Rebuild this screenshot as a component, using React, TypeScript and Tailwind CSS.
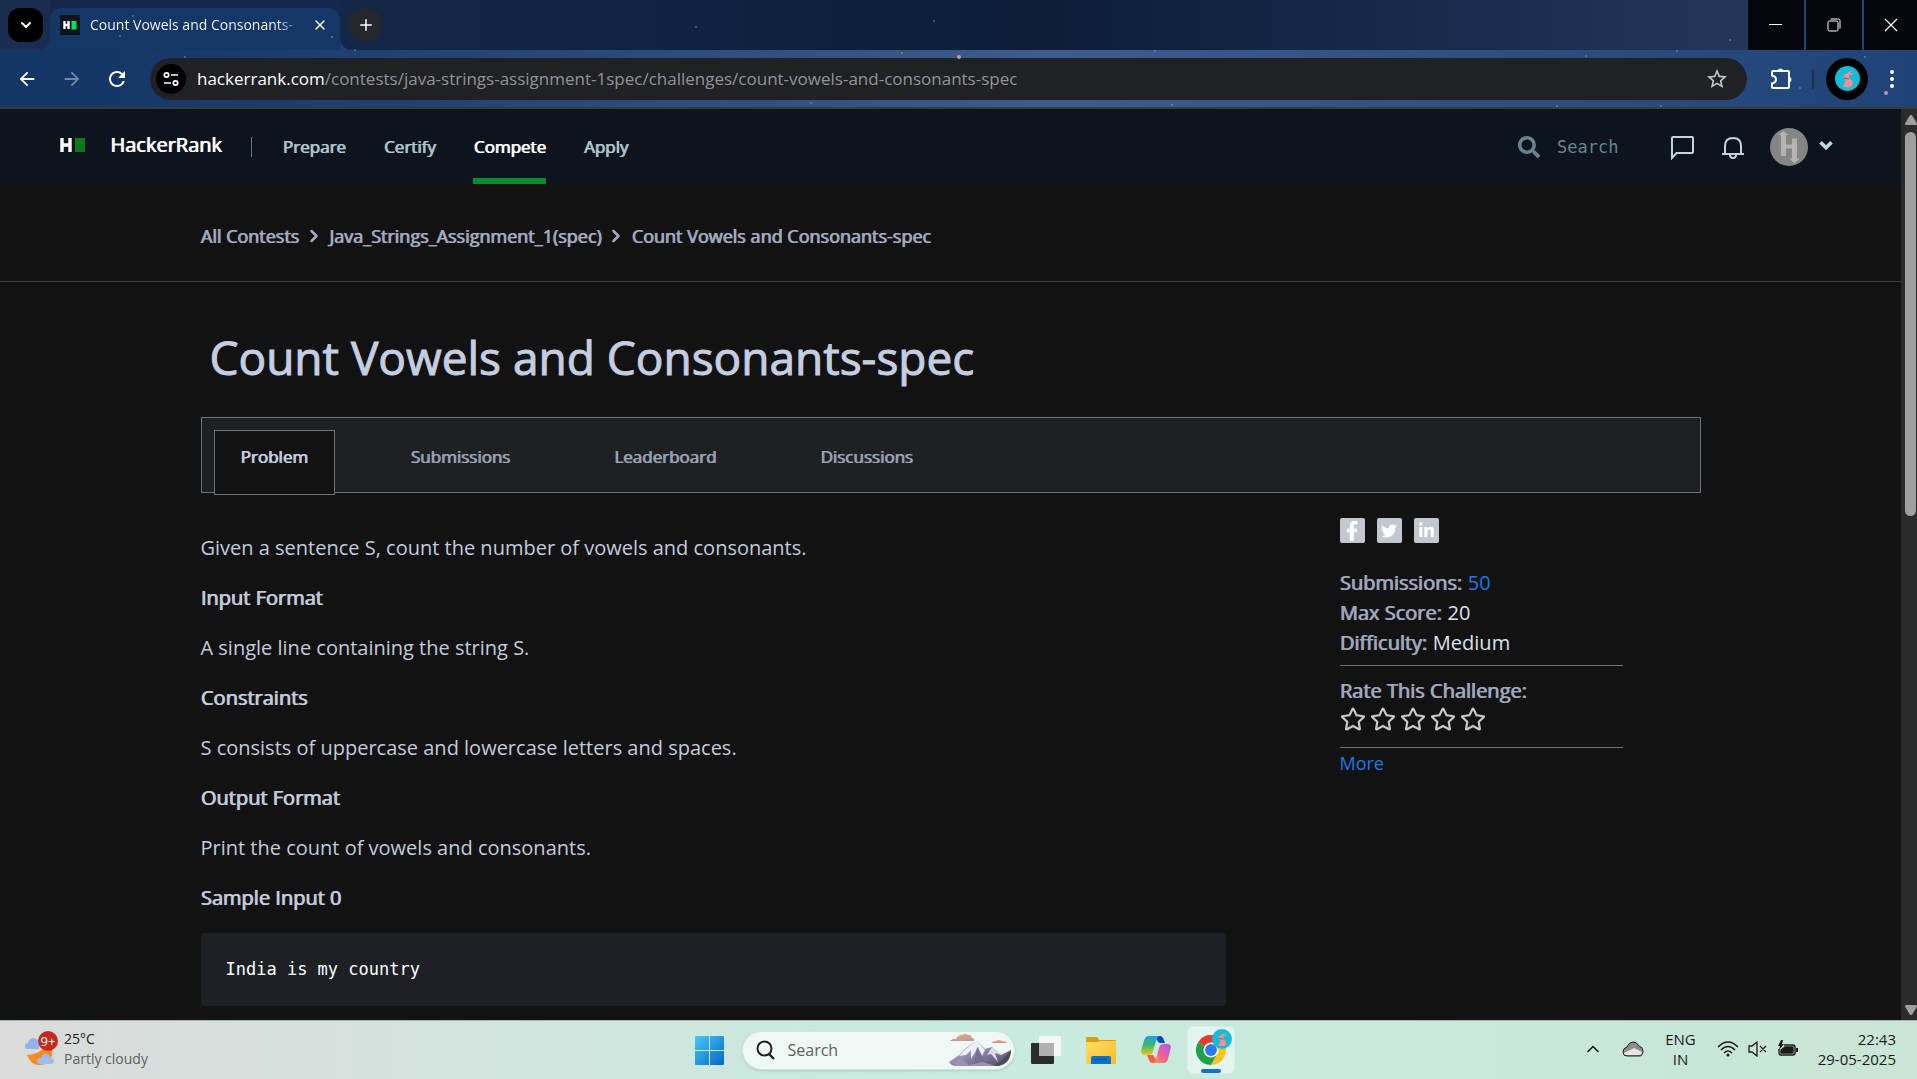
import React from "react";
import { ChevronDown, ChevronRight, ChevronUp, Plus, X } from "lucide-react";
import { FaRegStar, FaFacebookF, FaTwitter, FaLinkedinIn, FaSearch } from "react-icons/fa";
import { MdArrowBack, MdArrowForward, MdRefresh, MdStarBorder } from "react-icons/md";

const SPECKS = [
  [133, 16, 1], [120, 36, 1], [332, 37, 1], [355, 50, 1], [185, 57, 1], [902, 53, 1], [959, 57, 2], [1155, 51, 1],
  [811, 103, 1], [1172, 105, 1], [1730, 40, 1], [1586, 56, 1], [1677, 51, 1], [1865, 57, 1], [1800, 88, 1], [1886, 93, 2],
  [696, 27, 1], [934, 21, 1], [1557, 106, 1], [1661, 106, 1],
];

function Rabbit({ className }: { className: string }) {
  return (
    <svg viewBox="0 0 24 24" className={className} aria-hidden="true">
      <circle cx="12" cy="12" r="12" fill="#13bdd6" />
      <path d="M17.500 4.500C14.500 4.800 12.500 6 11 7.500L8.500 8.800C7.300 9.500 7.300 10.800 8.500 11.200L10.500 11.500C9.500 13 9.500 14 10 15.500L7.800 18.500C7.200 20 9 20.300 11 20.300H14.500C17.500 19.500 17.500 15.500 15.500 13.500C14 12.200 13.200 10.500 13.500 9C15.500 8.500 17.300 7.800 18 6.500L13.500 7.500C15 6 16.500 5.500 17.500 4.500Z" fill="#f58f98" />
      <path d="M8.500 11.200l5 1.300" stroke="#b8455f" strokeWidth="1" />
    </svg>
  );
}

function TabStrip() {
  return (
    <div className="flex h-[50px]">
      <div className="flex w-[50px] rounded-br-xl bg-[#1a2c4f] pl-2 pt-2">
        <button aria-label="Search tabs" className="flex h-[34px] w-[35px] items-center justify-center rounded-xl bg-black text-white">
          <ChevronDown size={16} strokeWidth={3} />
        </button>
      </div>
      <div className="w-[290px] bg-[#14284c] pt-2">
        <div className="flex h-[42px] items-center rounded-t-xl bg-[#143768] pb-2 pl-[10px] pr-[10px]">
          <svg viewBox="0 0 20 20" className="h-5 w-5 shrink-0" aria-hidden="true">
            <rect width="20" height="20" fill="#0d141e" />
            <path d="M4.500 6v8M8.500 6v8M3.500 10h5" stroke="#fff" strokeWidth="2.400" />
            <rect x="11.500" y="6" width="5" height="8.500" fill="#00e25b" />
          </svg>
          <span className="ml-[10px] flex-1 whitespace-nowrap bg-linear-to-r from-white from-88% to-transparent bg-clip-text text-sm text-transparent">
            Count Vowels and Consonants-
          </span>
          <button aria-label="Close tab" className="ml-2 flex h-5 w-5 items-center justify-center text-white">
            <X size={16} strokeWidth={2} />
          </button>
        </div>
      </div>
      <div className="flex flex-1 rounded-bl-xl bg-linear-to-r from-[#132748] via-[#0d1d3a] to-[#22365a] pl-2 pt-2">
        <button aria-label="New tab" className="flex h-[34px] w-[35px] items-center justify-center rounded-full bg-[#26272e] text-white">
          <Plus size={18} strokeWidth={2} />
        </button>
      </div>
      <div className="flex gap-[2px] text-white">
        <button aria-label="Minimize" className="flex w-14 items-center justify-center bg-[#03060c]">
          <svg viewBox="0 0 14 14" className="h-[14px] w-[14px]"><path d="M0 6.500h13" stroke="currentColor" /></svg>
        </button>
        <button aria-label="Restore" className="flex w-14 items-center justify-center bg-[#03060c]">
          <svg viewBox="0 0 14 14" className="h-[14px] w-[14px]" fill="none" stroke="currentColor">
            <rect x="1" y="3" width="10" height="10" rx="1.500" />
            <path d="M3.500 1H11.500Q13 1 13 2.500V10.500" />
          </svg>
        </button>
        <button aria-label="Close window" className="flex w-[53px] items-center justify-center bg-[#03060c]">
          <svg viewBox="0 0 14 14" className="h-[14px] w-[14px]"><path d="M1 1l12 12M13 1L1 13" stroke="currentColor" strokeWidth="1.200" /></svg>
        </button>
      </div>
    </div>
  );
}

function Toolbar() {
  return (
    <div className="flex h-[59px] items-center border-b-2 border-[#3a3a3a] pl-4 pr-[17px] text-white">
      <button aria-label="Back"><MdArrowBack size={22} /></button>
      <button aria-label="Forward" className="ml-[23px] text-[#7386a3]"><MdArrowForward size={22} /></button>
      <button aria-label="Reload" className="ml-[22px]"><MdRefresh size={24} /></button>
      <div className="ml-[21px] flex h-[42px] flex-1 items-center rounded-full bg-[#202124] pl-[6px] pr-[18px]">
        <button aria-label="View site information" className="flex h-[30px] w-[30px] items-center justify-center rounded-full bg-black">
          <svg viewBox="0 0 16 16" className="h-4 w-4" fill="none" stroke="currentColor" strokeWidth="1.700">
            <circle cx="3.500" cy="4" r="2.200" />
            <path d="M8 4h7M1 12h7" />
            <circle cx="12.500" cy="12" r="2.200" />
          </svg>
        </button>
        <div role="textbox" aria-label="Address and search bar" className="ml-[11px] flex-1 truncate text-[17px] text-[#939396]">
          <span className="text-white">hackerrank.com</span>/contests/java-strings-assignment-1spec/challenges/count-vowels-and-consonants-spec
        </div>
        <button aria-label="Bookmark this tab" className="text-[#c7c7c7]"><MdStarBorder size={24} /></button>
      </div>
      <button aria-label="Extensions" className="ml-[22px]">
        <svg viewBox="0 0 24 24" className="h-6 w-6" fill="none" stroke="currentColor" strokeWidth="2">
          <path d="M4 4H19Q20 4 20 5V20Q20 21 19 21H4Q3 21 3 20V16.500Q7 15.500 7 12.500Q7 9.500 3 8.500V5Q3 4 4 4Z" />
          <path d="M9 3.500Q9 1.500 11.500 1.500T14 3.500zM20.500 10Q22.500 10 22.500 12.500T20.500 15z" fill="currentColor" stroke="none" />
        </svg>
      </button>
      <span className="ml-[19px] h-5 w-[2px] bg-[#26304a]" />
      <button aria-label="Profile" className="ml-3 flex h-[42px] w-[42px] items-center justify-center rounded-full bg-black">
        <Rabbit className="h-[25px] w-[25px]" />
      </button>
      <button aria-label="Menu" className="ml-4 flex w-4 justify-center">
        <svg viewBox="0 0 4 20" className="h-5 w-1" fill="currentColor"><circle cx="2" cy="3" r="2" /><circle cx="2" cy="10" r="2" /><circle cx="2" cy="17" r="2" /></svg>
      </button>
    </div>
  );
}

function BrowserChrome() {
  return (
    <div className="relative shrink-0 bg-linear-to-r from-[#143666] from-5% via-[#3b5d8e] via-55% to-[#1f4377]">
      <TabStrip />
      <Toolbar />
      <svg className="pointer-events-none absolute left-0 top-0 h-full w-full" aria-hidden="true">
        {SPECKS.map(([x, y, r]) => (
          <circle key={`${x}-${y}`} cx={x} cy={y} r={r} fill={r === 2 ? "#d99aa5" : "#7f9cc4"} opacity={r === 2 ? 0.9 : 0.6} />
        ))}
      </svg>
    </div>
  );
}

function NavLink({ label, active }: { label: string; active?: boolean }) {
  return (
    <a
      href="#"
      className={
        active
          ? "flex h-full items-center border-b-[6px] border-[#058c2d] pt-[6px] text-[17px] text-white [text-shadow:1px_0_0_currentColor]"
          : "flex h-full items-center text-[17px] text-[#b2c6cd] [text-shadow:1px_0_0_currentColor]"
      }
    >
      {label}
    </a>
  );
}

function SiteHeader() {
  return (
    <header className="flex h-[75px] shrink-0 items-center bg-[#0d141e] pl-[60px] pr-16">
      <a href="#" className="flex items-center pb-1 text-white">
        <svg viewBox="0 0 25 14" className="h-[14px] w-[25px]" aria-hidden="true">
          <path d="M2 0v14M10 0v14M2 7h8" stroke="#fff" strokeWidth="3.400" />
          <rect x="15" width="10" height="14" fill="#0a7a1c" />
        </svg>
        <span className="ml-[25px] text-xl [text-shadow:1px_0_0_currentColor]">HackerRank</span>
      </a>
      <span className="ml-[29px] h-5 w-px bg-[#5c7a8c]" />
      <nav className="ml-[31px] flex h-full gap-[38px]">
        <NavLink label="Prepare" />
        <NavLink label="Certify" />
        <NavLink label="Compete" active />
        <NavLink label="Apply" />
      </nav>
      <label className="ml-auto flex items-center text-[#68868f]">
        <FaSearch size={22} aria-hidden="true" />
        <input
          type="search"
          aria-label="Search"
          placeholder="Search"
          className="ml-[17px] w-[100px] bg-transparent pt-[2px] font-['DejaVu_Sans_Mono',monospace] text-[17px] outline-none placeholder:text-[#68868f]"
        />
      </label>
      <button aria-label="Messages" className="ml-3 text-[#c1d5dc]">
        <svg viewBox="0 0 26 26" className="h-[26px] w-[26px]" fill="none" stroke="currentColor" strokeWidth="2">
          <path d="M3 24V4Q3 3 4 3H23Q24 3 24 4V18Q24 19 23 19H7.500Z" />
        </svg>
      </button>
      <button aria-label="Notifications" className="ml-[25px] text-[#c1d5dc]">
        <svg viewBox="0 0 26 26" className="h-[26px] w-[26px]" fill="none" stroke="currentColor" strokeWidth="2">
          <path d="M2 20H24M5 19.500V12Q5 4 13 4T21 12V19.500M10 21Q10 24 13 24T16 21" />
        </svg>
      </button>
      <button aria-label="Account" className="ml-6 flex items-center gap-[7px] text-[#c1d5dc]">
        <svg viewBox="0 0 38 38" className="h-[38px] w-[38px]" aria-hidden="true">
          <circle cx="19" cy="19" r="19" fill="#858585" />
          <path d="M13.500 3l5 4h-2.500v9.500h6V10.500h5V30.500h2.500l-5 5-5-5h2.500V20.500h-6V28h-5V7H8.500z" fill="#b4b4b4" />
        </svg>
        <span className="pb-[3px]"><ChevronDown size={22} strokeWidth={4} strokeLinecap="butt" strokeLinejoin="miter" /></span>
      </button>
    </header>
  );
}

function Breadcrumb() {
  return (
    <nav aria-label="Breadcrumb" className="border-b border-[#3f3f3f] pt-[37px] pb-[30px]">
      <div className="mx-auto flex max-w-[1500px] items-center gap-[5px] text-lg leading-[30px] text-[#a3aac0] [text-shadow:1px_0_0_currentColor]">
        <a href="#">All Contests</a>
        <ChevronRight size={20} strokeWidth={3} />
        <a href="#">Java_Strings_Assignment_1(spec)</a>
        <ChevronRight size={20} strokeWidth={3} />
        <span>Count Vowels and Consonants-spec</span>
      </div>
    </nav>
  );
}

const TABS = ["Submissions", "Leaderboard", "Discussions"];

function ChallengeTabs() {
  return (
    <div role="tablist" className="flex h-[76px] border border-[#6f7379] bg-[#1f2022] pl-3 pt-3 text-[17px]">
      <button role="tab" aria-selected="true" className="h-[65px] w-[121px] border border-[#6f7379] bg-[#121212] pb-3 text-[#c8d0e0] [text-shadow:1px_0_0_currentColor]">
        Problem
      </button>
      <div className="ml-[76px] flex h-[65px] gap-[104px] pb-3">
        {TABS.map((tab) => (
          <button key={tab} role="tab" aria-selected="false" className="text-[#9aa1b8] [text-shadow:1px_0_0_currentColor]">
            {tab}
          </button>
        ))}
      </div>
    </div>
  );
}

function Section({ title, text }: { title: string; text?: string }) {
  return (
    <>
      <h2 className="[text-shadow:1px_0_0_currentColor]">{title}</h2>
      {text && <p>{text}</p>}
    </>
  );
}

function Statement() {
  return (
    <article className="flex flex-col gap-5 pt-10 text-xl leading-[30px] text-[#c3cbdc]">
      <p>Given a sentence S, count the number of vowels and consonants.</p>
      <Section title="Input Format" text="A single line containing the string S." />
      <Section title="Constraints" text="S consists of uppercase and lowercase letters and spaces." />
      <Section title="Output Format" text="Print the count of vowels and consonants." />
      <Section title="Sample Input 0" />
      <pre className="rounded-sm bg-[#1d2025] px-[25px] py-[22px] font-['DejaVu_Sans_Mono',monospace] text-[17px] leading-[29px] text-white">India is my country</pre>
    </article>
  );
}

const SHARES = [
  { name: "Facebook", icon: <FaFacebookF size={20} /> },
  { name: "Twitter", icon: <FaTwitter size={16} /> },
  { name: "LinkedIn", icon: <FaLinkedinIn size={17} /> },
];

function Sidebar() {
  return (
    <aside className="max-w-[283px] pt-[25px] text-xl leading-[30px] text-[#a0a7bd]">
      <div className="flex gap-3 text-white">
        {SHARES.map((s) => (
          <a key={s.name} href="#" aria-label={s.name} className="flex h-[25px] w-[25px] items-center justify-center rounded-xs bg-[#c2c7d0]">
            {s.icon}
          </a>
        ))}
      </div>
      <dl className="mt-[25px] border-b border-[#6f7379] pb-[7px]">
        <div className="flex gap-[6px]">
          <dt className="[text-shadow:1px_0_0_currentColor]">Submissions:</dt>
          <dd><a href="#" className="text-[#1f78e6]">50</a></dd>
        </div>
        <div className="flex gap-[6px]">
          <dt className="[text-shadow:1px_0_0_currentColor]">Max Score:</dt>
          <dd className="text-[#dde2ec]">20</dd>
        </div>
        <div className="flex gap-[6px]">
          <dt className="[text-shadow:1px_0_0_currentColor]">Difficulty:</dt>
          <dd className="text-[#dde2ec]">Medium</dd>
        </div>
      </dl>
      <fieldset className="border-b border-[#6f7379] pt-[10px] pb-[15px]">
        <legend className="float-left w-full [text-shadow:1px_0_0_currentColor]">Rate This Challenge:</legend>
        <div className="flex w-full gap-1 text-[#c9c9c9]">
          {[1, 2, 3, 4, 5].map((n) => (
            <label key={n} className="relative block h-[26px] w-[26px]">
              <input type="radio" name="rating" value={n} aria-label={`${n} of 5 stars`} className="sr-only" />
              <FaRegStar size={26} />
            </label>
          ))}
        </div>
      </fieldset>
      <a href="#" className="text-lg leading-[30px] text-[#1f78e6]">More</a>
    </aside>
  );
}

function Scrollbar() {
  return (
    <div className="flex w-4 shrink-0 flex-col items-center bg-[#2b2b2b] pl-[3px] pt-[6px] pb-[5px]" aria-hidden="true">
      <svg viewBox="0 0 12 10" className="h-[10px] w-3" fill="#9f9f9f"><path d="M6 0Q7 0 7.500 1L12 8.500Q12 10 11 10H1Q0 10 0 8.500L4.500 1Q5 0 6 0z" /></svg>
      <div className="mt-[7px] h-[384px] w-[11px] rounded-full bg-[#9f9f9f]" />
      <svg viewBox="0 0 12 10" className="mt-auto h-[10px] w-3" fill="#9f9f9f"><path d="M6 10Q7 10 7.500 9L12 1.500Q12 0 11 0H1Q0 0 0 1.500L4.500 9Q5 10 6 10z" /></svg>
    </div>
  );
}

function Mountains() {
  return (
    <svg viewBox="0 0 64 34" className="h-[34px] w-16" aria-hidden="true">
      <defs>
        <linearGradient id="rock" x1="0" y1="0" x2="1" y2="1">
          <stop offset="0" stopColor="#d9d6ea" /><stop offset="0.500" stopColor="#8a83a6" /><stop offset="1" stopColor="#4c4862" />
        </linearGradient>
        <linearGradient id="dusk" x1="0" y1="0" x2="0" y2="1">
          <stop offset="0" stopColor="#e8a66e" /><stop offset="1" stopColor="#b99aa4" />
        </linearGradient>
      </defs>
      <path d="M1 8q3-3 6-2q2-4 6-4q3-2 6 0q3-1 4 3q3 0 2 3z" fill="url(#dusk)" />
      <path d="M42 10q2-2 5-2q3-2 6 0q4 0 5 2z" fill="url(#dusk)" />
      <path d="M0 29L10 22L18 14L28 8L36 16L43 14L52 22L62 17Q62 30 50 33H8Q2 33 0 29z" fill="url(#rock)" />
      <path d="M28 8L18 15L10 23L17 22L22 17L22 26L29 14L33 23L36 17z" fill="#f0eef8" />
      <path d="M43 14L38 22L42 21L49 29L46 20L52 22z" fill="#dcd9ec" />
      <path d="M28 14L25 33H36L33 23z" fill="#75708f" />
      <path d="M62 17L51 29L44 33Q60 34 62 17z" fill="#4f4b57" />
      <path d="M2 29L12 26L20 32L34 29L46 33H8z" fill="#9b91b5" />
    </svg>
  );
}

function ChromeLogo() {
  return (
    <svg viewBox="0 0 48 48" className="h-[30px] w-[30px]" aria-hidden="true">
      <path d="M24 24L3.200 12A24 24 0 0 1 44.800 12z" fill="#e53b2e" />
      <path d="M24 24L3.200 12A24 24 0 0 0 24 48L34.400 30z" fill="#1fa04b" />
      <path d="M24 24L44.800 12A24 24 0 0 1 24 48L34.400 30z" fill="#fcc31e" />
      <path d="M24 12H44.800L34 30z" fill="#fcc31e" />
      <circle cx="24" cy="24" r="12" fill="#fff" />
      <circle cx="24" cy="24" r="9.500" fill="#3079ea" />
    </svg>
  );
}

function Copilot() {
  return (
    <svg viewBox="0 0 30 30" className="h-[30px] w-[30px]" aria-hidden="true">
      <defs>
        <linearGradient id="cpl" x1="0" y1="0" x2="0" y2="1">
          <stop offset="0" stopColor="#1c9df0" /><stop offset="0.500" stopColor="#3fb868" /><stop offset="1" stopColor="#f3c61b" />
        </linearGradient>
        <linearGradient id="cpr" x1="1" y1="0" x2="0" y2="1">
          <stop offset="0" stopColor="#a55bf0" /><stop offset="0.500" stopColor="#ee5c9b" /><stop offset="1" stopColor="#ff9445" />
        </linearGradient>
      </defs>
      <path d="M14 1H19Q21.500 1 22.500 4L24 8H19Q17 8 16 5z" fill="#1145c4" />
      <path d="M16 28H11Q9 28 8 25L6 20H12Q13 22 15 24z" fill="#f2603c" />
      <path d="M8 1H18Q16 2 15 6L12 16Q11 20 7 20H4Q-1 20 0.500 14L3 6Q4 1 8 1z" fill="url(#cpl)" />
      <path d="M22 28H12Q14 27 15 24L18 13Q19 9 23 9H26Q31 9 29.500 14L27 24Q26 28 22 28z" fill="url(#cpr)" />
    </svg>
  );
}

function Weather() {
  return (
    <button className="flex items-center pb-[2px] pl-6 text-left text-sm leading-5">
      <svg viewBox="0 0 36 36" className="h-9 w-9" aria-hidden="true">
        <path d="M3 24Q13 24 21 16H28Q30 34 15 34Q7 34 3 24z" fill="#f28c1e" />
        <path d="M4 18Q1 18 1 15Q1 12 4 12Q5 7 10 7Q14 8 15 11V18z" fill="#90b4f0" />
        <path d="M16 33Q13 33 13 30Q13 27 17 27Q19 22 23 23Q26 24 26 27Q30 27 30 30Q30 33 27 33z" fill="#9dbdf3" />
        <circle cx="24" cy="10" r="10" fill="#c42b1c" />
        <text x="24" y="15" textAnchor="middle" fontSize="13" fill="#fff">9+</text>
      </svg>
      <span className="ml-1 flex flex-col">
        <span className="text-[#1b1b1b]">25°C</span>
        <span className="text-[#5b625f]">Partly cloudy</span>
      </span>
    </button>
  );
}

function Taskbar() {
  return (
    <footer className="grid h-[59px] shrink-0 grid-cols-[1fr_auto_1fr] items-center border-t border-[#a9b5b0] bg-linear-to-r from-[#dbdbdb] via-[#c7ecdf] to-[#c9e5d6]">
      <Weather />
      <div className="flex items-center pl-3">
        <button aria-label="Start">
          <svg viewBox="0 0 29 29" className="h-[29px] w-[29px]">
            <defs><linearGradient id="win" x1="0" y1="0" x2="1" y2="1"><stop offset="0" stopColor="#4cc8fb" /><stop offset="1" stopColor="#0067c8" /></linearGradient></defs>
            <path d="M0 1q0-1 1-1h13v14H0zM15 0h13q1 0 1 1v13H15zM0 15h14v14H1q-1 0-1-1zM15 15h14v13q0 1-1 1H15z" fill="url(#win)" />
          </svg>
        </button>
        <label className="ml-[18px] flex h-[39px] w-[273px] items-center rounded-full border border-[#d5e5df] bg-[#eff8f5] pl-[13px] pr-px shadow-sm">
          <svg viewBox="0 0 20 20" className="h-5 w-5 shrink-0" fill="none" stroke="#1f1f1f" strokeWidth="2" aria-hidden="true"><circle cx="8.500" cy="8.500" r="7" /><path d="M13 14l5 5" strokeWidth="2.400" /></svg>
          <input aria-label="Search" placeholder="Search" className="ml-3 min-w-0 flex-1 bg-transparent text-base outline-none placeholder:text-[#5c5f5e]" />
          <Mountains />
        </label>
        <button aria-label="Task view" className="ml-4">
          <svg viewBox="0 0 30 30" className="h-[30px] w-[30px]">
            <rect y="8" width="23" height="21" rx="1" fill="#2c2c2c" />
            <rect x="8" y="1" width="22" height="20" rx="1" fill="#f7f7f7" />
            <path d="M8 8h15v13H8z" fill="#b0b0b0" />
          </svg>
        </button>
        <button aria-label="File Explorer" className="ml-[25px]">
          <svg viewBox="0 0 30 30" className="h-[30px] w-[30px]">
            <defs><linearGradient id="fold" x1="0" y1="0" x2="1" y2="1"><stop offset="0" stopColor="#ffdc6b" /><stop offset="1" stopColor="#fbbd22" /></linearGradient></defs>
            <path d="M0 3q0-1 1-1h9q1 0 2 1l1 2h16q1 0 1 1v5H0z" fill="#dd9c0a" />
            <path d="M0 7h12l2-1h16v22q0 1-1 1H1q-1 0-1-1z" fill="url(#fold)" />
            <path d="M5 29v-6q0-2 2-2h16q2 0 2 2v6z" fill="#0c71c9" />
            <path d="M8 24.500h13" stroke="#0a4f94" />
          </svg>
        </button>
        <button aria-label="Copilot" className="ml-[25px]"><Copilot /></button>
        <button aria-label="Google Chrome" className="relative ml-4 flex h-12 w-12 items-center justify-center rounded-md border border-[#dcebe5] bg-[#e4f5ef]">
          <ChromeLogo />
          <Rabbit className="absolute right-[2px] top-[2px] h-5 w-5" />
          <span className="absolute bottom-0 h-1 w-5 rounded-full bg-[#0a74d6]" />
        </button>
      </div>
      <div className="flex items-center justify-end pb-[2px] pr-[21px] text-[15px] leading-5 text-[#1b1b1b]">
        <button aria-label="Show hidden icons"><ChevronUp size={20} strokeWidth={2} /></button>
        <svg viewBox="0 0 22 16" className="ml-[19px] h-4 w-[22px]" aria-hidden="true">
          <path d="M5 15Q1 15 1 11Q1 7 5 6Q7 1 11 1Q15 1 17 5Q21 6 21 10Q21 15 17 15z" fill="#8e8e8e" stroke="#1f1f1f" />
          <path d="M2 12L12 7L20 11Q20 14 17 14H5Q2 14 2 12z" fill="#e6e6e6" />
        </svg>
        <button className="ml-[21px] text-center">ENG<br />IN</button>
        <button aria-label="Network, volume, battery" className="ml-[21px] flex items-center gap-[9px]">
          <svg viewBox="0 0 22 16" className="h-4 w-[22px]" fill="none" stroke="currentColor" strokeWidth="1.500">
            <path d="M1 6Q11-4 21 6M4 9Q11 2 18 9M7 12Q11 8 15 12" /><circle cx="11" cy="14" r="1.500" fill="currentColor" stroke="none" />
          </svg>
          <svg viewBox="0 0 20 16" className="h-4 w-5" fill="none" stroke="currentColor" strokeWidth="1.300">
            <path d="M1 5h3l5-4v14l-5-4H1zM12 5l6 6M18 5l-6 6" />
          </svg>
          <svg viewBox="0 0 22 18" className="h-[18px] w-[22px]" fill="none" stroke="currentColor" strokeWidth="1.400">
            <path d="M7 5H16Q18 5 18 7V13Q18 15 16 15H4Q2 15 2 13V9" />
            <path d="M8 7h8v6H4v-3z" fill="currentColor" /><path d="M20 8v4" strokeWidth="2" /><path d="M4 0L1 6h2l-1 4 5-6H5l1-4z" fill="currentColor" stroke="none" />
          </svg>
        </button>
        <button className="ml-[19px] text-right">22:43<br />29-05-2025</button>
      </div>
    </footer>
  );
}

export default function App() {
  return (
    <div className="flex h-screen flex-col overflow-hidden bg-[#121212] font-['Open_Sans',sans-serif]">
      <BrowserChrome />
      <div className="flex min-h-0 flex-1">
        <div className="flex min-w-0 flex-1 flex-col overflow-hidden">
          <SiteHeader />
          <Breadcrumb />
          <main className="mx-auto w-full max-w-[1500px]">
            <h1 className="pl-[9px] pt-[43px] pb-[28px] text-[46px] leading-[64px] text-[#c5cde0] [-webkit-text-stroke:1px_currentColor]">
              Count Vowels and Consonants-spec
            </h1>
            <ChallengeTabs />
            <div className="grid grid-cols-[1025fr_361fr] gap-[114px]">
              <Statement />
              <Sidebar />
            </div>
          </main>
        </div>
        <Scrollbar />
      </div>
      <Taskbar />
    </div>
  );
}
